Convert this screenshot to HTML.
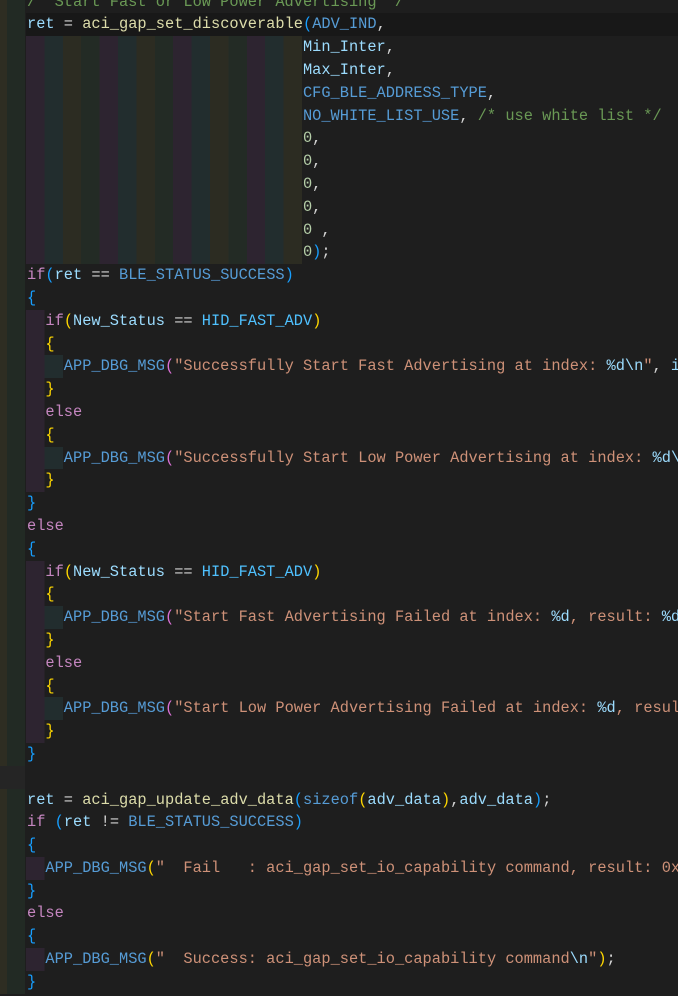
<!DOCTYPE html>
<html><head><meta charset="utf-8"><style>
html,body{margin:0;padding:0;background:#1e1e1e;width:678px;height:996px;overflow:hidden}
#c{position:absolute;left:0;top:-9.4px;width:678px;font-family:"Liberation Mono",monospace;font-size:15.33px;color:#d4d4d4}
.l{height:22.8px;line-height:22.8px;padding-left:27px;white-space:pre;overflow:hidden;
background:linear-gradient(to right,#2e2d22 0 7px,#222a24 7px 25px,transparent 25px)}
.bl{background:#252525 linear-gradient(to right,#252525 0 25px,#1e1e1e 25px)}
.cur{background:linear-gradient(to right,#2e2d22 0 7px,#222a24 7px 25px,#1e1e1e 25px 26px,#181818 26px)}
.g1{background:linear-gradient(to right,#2e2d22 0 7px,#222a24 7px 25px,transparent 25px 26px,#2d2430 26px 44.4px,transparent 44.4px)}
.g2{background:linear-gradient(to right,#2e2d22 0 7px,#222a24 7px 25px,transparent 25px 26px,#2d2430 26px 44.4px,#222d2e 44.4px 62.8px,transparent 62.8px)}
.gp{background:linear-gradient(to right,#2e2d22 0 7px,#222a24 7px 25px,transparent 25px 26px,
#2d2430 26px 44.4px,#222d2e 44.4px 62.8px,#2c2c22 62.8px 81.2px,#232b25 81.2px 99.6px,
#2d2430 99.6px 118px,#222d2e 118px 136.4px,#2c2c22 136.4px 154.8px,#232b25 154.8px 173.2px,
#2d2430 173.2px 191.6px,#222d2e 191.6px 210px,#2c2c22 210px 228.4px,#232b25 228.4px 246.8px,
#2d2430 246.8px 265.2px,#222d2e 265.2px 283.6px,#2c2c22 283.6px 302px,transparent 302px)}
.k{color:#c586c0}.v{color:#9cdcfe}.f{color:#dcdcaa}.m{color:#569cd6}.h{color:#4fc1ff}
.s{color:#ce9178}.e{color:#9cdcfe}.n{color:#b5cea8}.cm{color:#6a9955}
.b1{color:#179fff}.b2{color:#ffd700}.b3{color:#da70d6}
</style></head><body><div id="c">
<div class="l"><span class="cm">/* Start Fast or Low Power Advertising */</span></div>
<div class="l cur"><span class="v">ret</span> = <span class="f">aci_gap_set_discoverable</span><span class="b1">(</span><span class="m">ADV_IND</span>,</div>
<div class="l gp">                              <span class="v">Min_Inter</span>,</div>
<div class="l gp">                              <span class="v">Max_Inter</span>,</div>
<div class="l gp">                              <span class="m">CFG_BLE_ADDRESS_TYPE</span>,</div>
<div class="l gp">                              <span class="m">NO_WHITE_LIST_USE</span>, <span class="cm">/* use white list */</span></div>
<div class="l gp">                              <span class="n">0</span>,</div>
<div class="l gp">                              <span class="n">0</span>,</div>
<div class="l gp">                              <span class="n">0</span>,</div>
<div class="l gp">                              <span class="n">0</span>,</div>
<div class="l gp">                              <span class="n">0</span> ,</div>
<div class="l gp">                              <span class="n">0</span><span class="b1">)</span>;</div>
<div class="l"><span class="k">if</span><span class="b1">(</span><span class="v">ret</span> == <span class="m">BLE_STATUS_SUCCESS</span><span class="b1">)</span></div>
<div class="l"><span class="b1">{</span></div>
<div class="l g1">  <span class="k">if</span><span class="b2">(</span><span class="v">New_Status</span> == <span class="h">HID_FAST_ADV</span><span class="b2">)</span></div>
<div class="l g1">  <span class="b2">{</span></div>
<div class="l g2">    <span class="m">APP_DBG_MSG</span><span class="b3">(</span><span class="s">"Successfully Start Fast Advertising at index: </span><span class="e">%d\n</span><span class="s">"</span>, <span class="v">i</span></div>
<div class="l g1">  <span class="b2">}</span></div>
<div class="l g1">  <span class="k">else</span></div>
<div class="l g1">  <span class="b2">{</span></div>
<div class="l g2">    <span class="m">APP_DBG_MSG</span><span class="b3">(</span><span class="s">"Successfully Start Low Power Advertising at index: </span><span class="e">%d\</span></div>
<div class="l g1">  <span class="b2">}</span></div>
<div class="l"><span class="b1">}</span></div>
<div class="l"><span class="k">else</span></div>
<div class="l"><span class="b1">{</span></div>
<div class="l g1">  <span class="k">if</span><span class="b2">(</span><span class="v">New_Status</span> == <span class="h">HID_FAST_ADV</span><span class="b2">)</span></div>
<div class="l g1">  <span class="b2">{</span></div>
<div class="l g2">    <span class="m">APP_DBG_MSG</span><span class="b3">(</span><span class="s">"Start Fast Advertising Failed at index: </span><span class="e">%d</span><span class="s">, result: </span><span class="e">%d</span></div>
<div class="l g1">  <span class="b2">}</span></div>
<div class="l g1">  <span class="k">else</span></div>
<div class="l g1">  <span class="b2">{</span></div>
<div class="l g2">    <span class="m">APP_DBG_MSG</span><span class="b3">(</span><span class="s">"Start Low Power Advertising Failed at index: </span><span class="e">%d</span><span class="s">, resul</span></div>
<div class="l g1">  <span class="b2">}</span></div>
<div class="l"><span class="b1">}</span></div>
<div class="l bl"> </div>
<div class="l"><span class="v">ret</span> = <span class="f">aci_gap_update_adv_data</span><span class="b1">(</span><span class="m">sizeof</span><span class="b2">(</span><span class="v">adv_data</span><span class="b2">)</span>,<span class="v">adv_data</span><span class="b1">)</span>;</div>
<div class="l"><span class="k">if</span> <span class="b1">(</span><span class="v">ret</span> != <span class="m">BLE_STATUS_SUCCESS</span><span class="b1">)</span></div>
<div class="l"><span class="b1">{</span></div>
<div class="l g1">  <span class="m">APP_DBG_MSG</span><span class="b2">(</span><span class="s">"  Fail   : aci_gap_set_io_capability command, result: 0x</span></div>
<div class="l"><span class="b1">}</span></div>
<div class="l"><span class="k">else</span></div>
<div class="l"><span class="b1">{</span></div>
<div class="l g1">  <span class="m">APP_DBG_MSG</span><span class="b2">(</span><span class="s">"  Success: aci_gap_set_io_capability command</span><span class="e">\n</span><span class="s">"</span><span class="b2">)</span>;</div>
<div class="l"><span class="b1">}</span></div>
</div></body></html>
